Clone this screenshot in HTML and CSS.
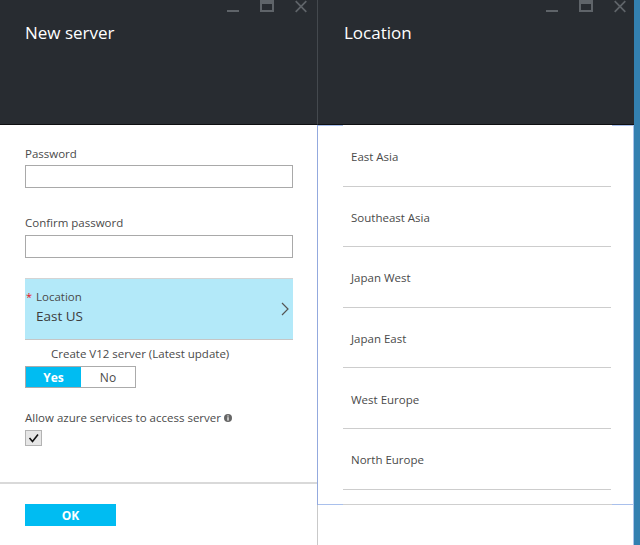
FILE: index.html
```html
<!DOCTYPE html>
<html>
<head>
<meta charset="utf-8">
<title>New server</title>
<link rel="stylesheet" href="styles.css">
</head>
<body>
<div class="screen">
  <section class="blade blade-new">
    <header class="head">
      <div class="controls">
        <svg class="ic" width="12" height="13" viewBox="0 0 12 13"><rect x="0" y="10" width="12" height="2"/></svg>
        <svg class="ic" width="14" height="13" viewBox="0 0 14 13"><path fill-rule="evenodd" d="M0 0h14v12H0z M2 4h10v6H2z"/></svg>
        <svg class="ic" width="12" height="13" viewBox="0 0 12 13"><path d="M0.7 1.2L11.3 11.8M11.3 1.2L0.7 11.8" stroke-width="1.7" fill="none"/></svg>
      </div>
      <h1 class="title">New server</h1>
    </header>
    <div class="form">
      <div class="lbl">Password</div>
      <div class="input first"></div>
      <div class="lbl gap-lbl">Confirm password</div>
      <div class="input second"></div>
      <div class="loc">
        <div class="loc-text">
          <div class="loc-lbl"><span class="req">*</span><span>Location</span></div>
          <div class="loc-val">East US</div>
        </div>
        <svg class="chev" width="8" height="14" viewBox="0 0 8 14"><polyline points="1,1 7,7 1,13" fill="none" stroke="#555" stroke-width="1.2"/></svg>
      </div>
      <div class="v12">Create V12 server (Latest update)</div>
      <div class="toggle">
        <div class="seg yes">Yes</div>
        <div class="seg no">No</div>
      </div>
      <div class="allow">
        <span>Allow azure services to access server</span>
        <svg class="info" width="8" height="8" viewBox="0 0 8 8"><circle cx="4" cy="4" r="4" fill="#666"/><rect x="3.4" y="1.4" width="1.2" height="1.1" fill="#fff"/><rect x="3.4" y="3.2" width="1.2" height="3.4" fill="#fff"/></svg>
      </div>
      <div class="check">
        <svg width="15" height="14" viewBox="0 0 15 14"><polyline points="3.5,7 6.5,10.5 12,3.5" fill="none" stroke="#111" stroke-width="1.6"/></svg>
      </div>
    </div>
    <div class="footer">
      <button class="ok">OK</button>
    </div>
  </section>

  <section class="blade blade-loc">
    <header class="head">
      <div class="controls">
        <svg class="ic" width="12" height="13" viewBox="0 0 12 13"><rect x="0" y="10" width="12" height="2"/></svg>
        <svg class="ic" width="14" height="13" viewBox="0 0 14 13"><path fill-rule="evenodd" d="M0 0h14v12H0z M2 4h10v6H2z"/></svg>
        <svg class="ic" width="12" height="13" viewBox="0 0 12 13"><path d="M0.7 1.2L11.3 11.8M11.3 1.2L0.7 11.8" stroke-width="1.7" fill="none"/></svg>
      </div>
      <h1 class="title">Location</h1>
    </header>
    <div class="list">
      <div class="edge"><div class="seg-l"></div><div class="mid"></div><div class="seg-r"></div></div>
      <div class="item">East Asia</div>
      <div class="item">Southeast Asia</div>
      <div class="item">Japan West</div>
      <div class="item">Japan East</div>
      <div class="item">West Europe</div>
      <div class="item">North Europe</div>
      <div class="spacer"></div>
      <div class="edge bottom"><div class="seg-l"></div><div class="mid"></div><div class="seg-r"></div></div>
    </div>
    <div class="rfoot"></div>
  </section>
  <div class="strip"></div>
</div>
</body>
</html>
```

FILE: styles.css
```css
* {
  box-sizing: border-box;
  margin: 0;
  padding: 0;
}

body {
  margin: 0;
  width: 640px;
  height: 545px;
  overflow: hidden;
  background: #fff;
  font-family: "Open Sans", "Noto Sans", sans-serif;
  color: #4a4a4a;
}

.screen {
  display: flex;
  height: 545px;
}

.blade {
  display: flex;
  flex-direction: column;
  height: 545px;
  width: 317px;
}

.head {
  height: 125px;
  background: #282c31;
  border-bottom: 1px solid #0e0f11;
  display: flex;
  flex-direction: column;
  padding: 0 10px 0 25px;
}

.blade-loc .head {
  border-left: 1px solid #44494e;
  padding: 0 8px 0 26px;
}

.controls {
  display: flex;
  justify-content: flex-end;
  gap: 21px;
  height: 13px;
}

.ic {
  fill: #5f6469;
  stroke: #5f6469;
}

.ic rect,
.ic path[fill-rule] {
  stroke: none;
}

.title {
  margin-top: 8px;
  font-size: 17px;
  font-weight: 400;
  line-height: 23px;
  color: #fff;
}

/* form */
.form {
  flex: 1;
  display: flex;
  flex-direction: column;
  padding: 21px 24px 0 25px;
}

.lbl {
  font-size: 11.5px;
  line-height: 16px;
  color: #4a4a4a;
}

.gap-lbl {
  margin-top: 27px;
}

.input {
  height: 23px;
  border: 1px solid #a9a9a9;
  background: #fff;
}

.input.first {
  margin-top: 3px;
}

.input.second {
  margin-top: 4px;
}

.loc {
  margin-top: 20px;
  height: 62px;
  background: #b3e9f9;
  border-top: 1px solid #d4d4d4;
  border-bottom: 1px solid #c6c6c6;
  display: flex;
  align-items: center;
  padding: 0 4px 0 1px;
}

.loc-text {
  flex: 1;
  align-self: flex-start;
  padding-top: 10px;
}

.loc-lbl {
  display: flex;
  font-size: 11.5px;
  line-height: 16px;
  color: #4a4a4a;
}

.req {
  width: 10px;
  color: #e81123;
  font-size: 11px;
}

.loc-val {
  margin: 1px 0 0 10px;
  font-size: 13.5px;
  line-height: 20px;
  color: #3c3c3c;
}

.v12 {
  margin: 6px 0 0 26px;
  font-size: 11.5px;
  line-height: 16px;
}

.toggle {
  margin-top: 4px;
  display: flex;
  width: 111px;
  height: 22px;
  border: 1px solid #ababab;
}

.seg {
  display: flex;
  align-items: center;
  justify-content: center;
  font-size: 12px;
}

.yes {
  width: 55px;
  background: #00bcf2;
  color: #fff;
  font-weight: 700;
}

.no {
  flex: 1;
  background: #fff;
  color: #4a4a4a;
}

.allow {
  margin-top: 22px;
  display: flex;
  align-items: center;
  gap: 3px;
  font-size: 11.5px;
  line-height: 16px;
}

.check {
  margin-top: 4px;
  width: 17px;
  height: 16px;
  border: 1px solid #b3b3b3;
  background: #e6e6e6;
}

.check svg {
  display: block;
}

.footer {
  height: 63px;
  border-top: 2px solid #d9d9d9;
  padding: 20px 0 0 25px;
}

.ok {
  display: block;
  width: 91px;
  height: 22px;
  border: none;
  background: #00bcf2;
  color: #fff;
  font-family: inherit;
  font-size: 12px;
  font-weight: 700;
}

/* location list */
.list {
  height: 380px;
  display: flex;
  flex-direction: column;
  border-left: 1px solid #93a9de;
  border-right: 1px solid #a9c3ea;
}

.edge {
  display: flex;
  height: 1px;
  flex: none;
}

.edge .seg-l {
  width: 25px;
  background: #a9c0ec;
}

.edge .mid {
  flex: 1;
}

.edge .seg-r {
  width: 21px;
  background: #a9c0ec;
}

.edge.bottom .mid {
  background: #cfcfcf;
}

.item {
  flex: none;
  height: 60.6px;
  margin: 0 22px 0 25px;
  padding: 2px 0 0 8px;
  border-bottom: 1px solid #cdcdcd;
  display: flex;
  align-items: center;
  font-size: 11.5px;
  color: #4a4a4a;
}

.spacer {
  flex: 1;
}

.rfoot {
  flex: 1;
  border-left: 1px solid #c9c9c9;
  border-right: 1px solid #a9c3ea;
}

.strip {
  width: 6px;
  background: #3380b0;
}
```
